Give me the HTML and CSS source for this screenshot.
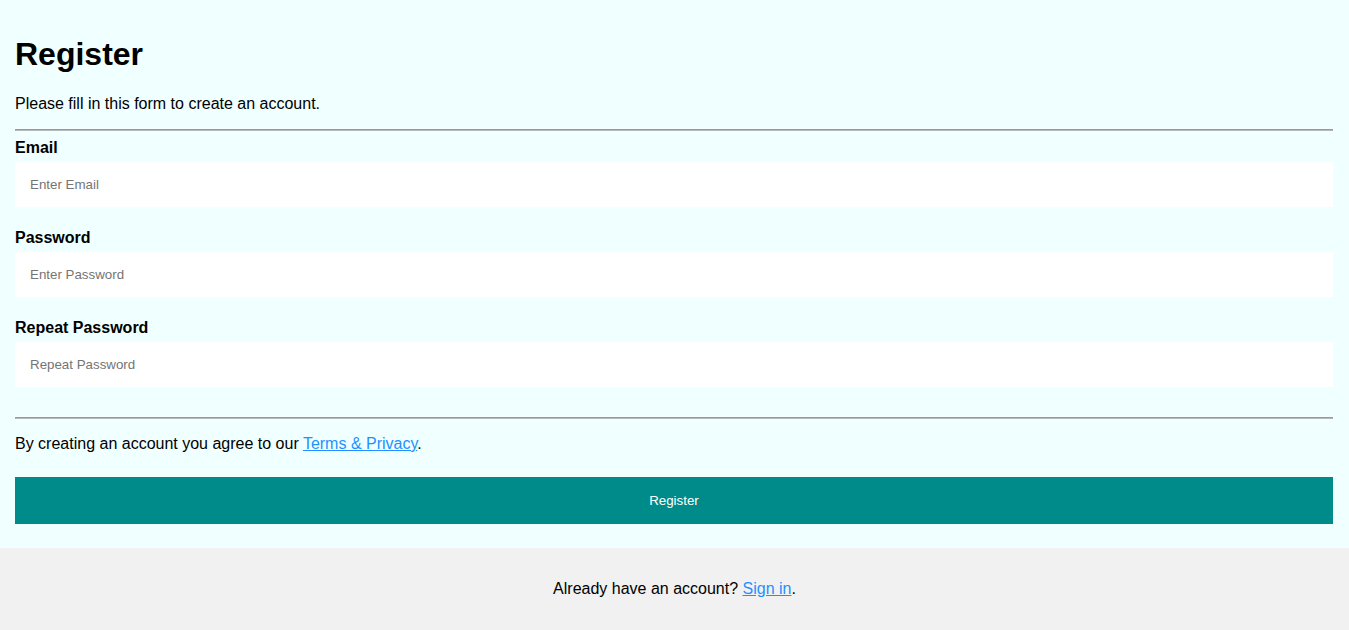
FILE: index.html
```html
<!DOCTYPE html>
<html lang="en">
<head>
<meta charset="utf-8">
<title>Register</title>
<link rel="stylesheet" href="styles.css">
</head>
<body>
<form class="form">
  <div class="container">
    <h1 class="title">Register</h1>
    <p class="text">Please fill in this form to create an account.</p>
    <hr class="rule">

    <label class="label" for="email"><b>Email</b></label>
    <input class="field" type="text" placeholder="Enter Email" name="email" id="email">

    <label class="label" for="psw"><b>Password</b></label>
    <input class="field" type="password" placeholder="Enter Password" name="psw" id="psw">

    <label class="label" for="psw-repeat"><b>Repeat Password</b></label>
    <input class="field" type="password" placeholder="Repeat Password" name="psw-repeat" id="psw-repeat">
    <hr class="rule">

    <p class="text">By creating an account you agree to our <a class="link" href="#">Terms &amp; Privacy</a>.</p>
    <button type="submit" class="registerbtn">Register</button>
  </div>

  <div class="signin">
    <p class="text">Already have an account? <a class="link" href="#">Sign in</a>.</p>
  </div>
</form>
</body>
</html>
```
FILE: styles.css
```css
* {
  box-sizing: border-box;
}

body {
  margin: 0;
  font-family: "Liberation Sans", Arial, Helvetica, sans-serif;
  background-color: #f1f1f1;
  color: #000;
}

.container {
  padding: 15px 16px 16px 15px;
  background-color: #f0ffff;
}

.title {
  font-size: 32px;
  margin: 21.44px 0;
}

.text {
  font-size: 16px;
  margin: 16px 0;
}

.rule {
  margin: 8px 0;
  border: 1px solid #a0a0a0;
  border-top-color: #9a9a9a;
  border-bottom-color: #b8b8b8;
}

.label {
  font-size: 16px;
}

.field {
  width: 100%;
  padding: 15px;
  margin: 5px 0 22px 0;
  display: inline-block;
  border: none;
  background: #ffffff;
  font-family: "Liberation Sans", Arial, sans-serif;
  font-size: 13.333px;
}

.field::placeholder {
  color: #757575;
}

.registerbtn {
  background-color: #008b8b;
  color: #ffffff;
  padding: 16px 20px;
  margin: 8px 0;
  border: none;
  cursor: pointer;
  width: 100%;
  font-family: "Liberation Sans", Arial, sans-serif;
  font-size: 13.333px;
}

.link {
  color: dodgerblue;
}

.signin {
  background-color: #f1f1f1;
  text-align: center;
  padding: 16px;
}
```
